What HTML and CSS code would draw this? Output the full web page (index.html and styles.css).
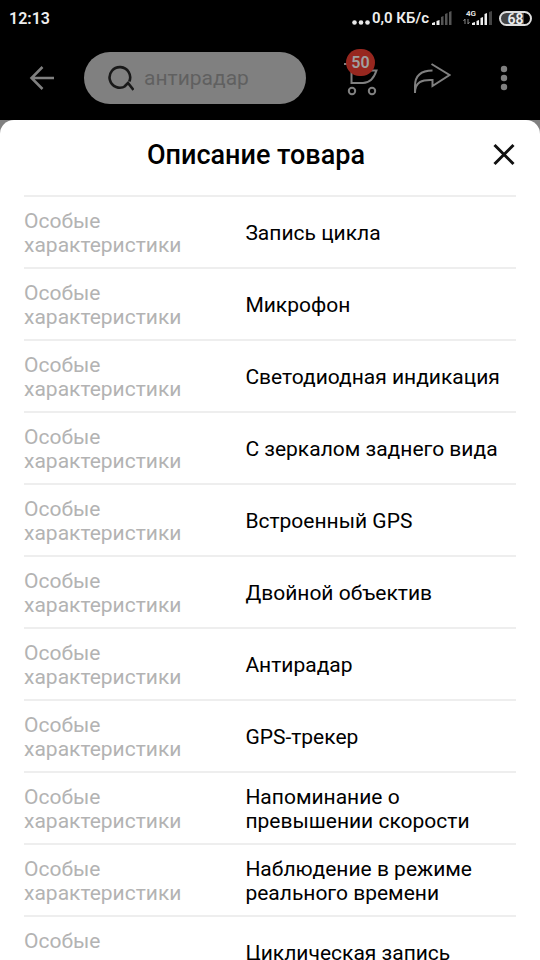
FILE: index.html
```html
<!DOCTYPE html>
<html lang="ru">
<head>
<meta charset="utf-8">
<meta name="viewport" content="width=device-width, initial-scale=1">
<title>Описание товара</title>
<link rel="stylesheet" href="styles.css">
</head>
<body>
<div class="status">
  <span class="clock">12:13</span>
  <div class="indicators">
    <svg class="dots" width="18" height="16" viewBox="0 0 18 16" fill="#e8e8e8"><circle cx="2.5" cy="12.5" r="2.3"/><circle cx="9" cy="12.5" r="2.3"/><circle cx="15.5" cy="12.5" r="2.3"/></svg>
    <span class="speed">0,0 КБ/с</span>
    <svg class="signal" width="20" height="16" viewBox="0 0 20 16"><path fill="#eee" d="M0 15v-2l3-1v3zM4.500 15v-4l3-1v5z"/><path fill="#555" d="M9 15V7l2.500-1v9zM13 15V4l2.500-1v12zM17 15V2l2.500-1v14z"/></svg>
    <svg class="signal-4g" width="31" height="26" viewBox="0 5 31 26"><text x="3" y="16" class="net">4G</text><path fill="none" stroke="#888" d="M2 24v-5l-1.500 2M5 19v5l1.500-2"/><path fill="#eee" d="M9 25v-2l3-1v3zM13.500 25v-4l2.500-1v5zM17.500 25v-7l2.500-1v8zM21.500 25V14l2.500-1v12z"/><path fill="#444" d="M26 25V12l3-1v14z"/></svg>
    <span class="battery">68</span>
  </div>
</div>
<header class="toolbar">
  <button class="icon-button back" aria-label="Назад"><svg width="26" height="26" viewBox="0 0 26 26" fill="none" stroke="#808080" stroke-width="2.500"><path d="M13.500 2 2.500 13l11 11M2.500 13H25"/></svg></button>
  <label class="search">
    <svg width="26" height="27" viewBox="0 0 26 27" fill="none" stroke="#191919" stroke-width="2.600"><path d="M21.300 16.500A10.300 10.300 0 1 0 17.500 21M16.500 21.500l3.500-3.500 5.500 7"/></svg>
    <input type="text" placeholder="антирадар" aria-label="Поиск">
  </label>
  <button class="icon-button cart" aria-label="Корзина"><svg width="36" height="44" viewBox="0 0 36 44" fill="none" stroke="#808080" stroke-width="2"><path d="M2 8h6l1.500 6v13H21c7 0 11-5 13.500-12.500H9.500"/><circle cx="10" cy="35" r="3.200"/><circle cx="30" cy="35" r="3.200"/></svg><span class="badge">50</span></button>
  <button class="icon-button share" aria-label="Поделиться"><svg width="38" height="32" viewBox="0 0 38 32" fill="none" stroke="#808080" stroke-width="2"><path d="M18.500 2 36.500 13 19.500 24v-6C9 17.500 2 20 2 31V24C2 14 8 8.500 19.500 8.500"/></svg></button>
  <button class="icon-button more" aria-label="Ещё"><svg width="8" height="26" viewBox="0 0 8 26" fill="#808080"><circle cx="4" cy="4" r="3.200"/><circle cx="4" cy="13" r="3.200"/><circle cx="4" cy="22" r="3.200"/></svg></button>
</header>
<main class="sheet">
  <div class="sheet-head">
    <h1>Описание товара</h1>
    <button class="icon-button close" aria-label="Закрыть"><svg width="24" height="24" viewBox="0 0 24 24" fill="none" stroke="#111" stroke-width="3"><path d="m2.500 2 19 19m0-19-19 19"/></svg></button>
  </div>
  <table class="specs">
    <tbody>
      <tr><th scope="row">Особые характеристики</th><td>Запись цикла</td></tr>
      <tr><th scope="row">Особые характеристики</th><td>Микрофон</td></tr>
      <tr><th scope="row">Особые характеристики</th><td>Светодиодная индикация</td></tr>
      <tr><th scope="row">Особые характеристики</th><td>С зеркалом заднего вида</td></tr>
      <tr><th scope="row">Особые характеристики</th><td>Встроенный GPS</td></tr>
      <tr><th scope="row">Особые характеристики</th><td>Двойной объектив</td></tr>
      <tr><th scope="row">Особые характеристики</th><td>Антирадар</td></tr>
      <tr><th scope="row">Особые характеристики</th><td>GPS-трекер</td></tr>
      <tr><th scope="row">Особые характеристики</th><td>Напоминание о превышении скорости</td></tr>
      <tr><th scope="row">Особые характеристики</th><td>Наблюдение в режиме реального времени</td></tr>
      <tr><th scope="row">Особые характеристики</th><td>Циклическая запись</td></tr>
    </tbody>
  </table>
</main>
</body>
</html>
```
FILE: styles.css
```css
* { box-sizing: border-box; }
body {
  margin: 0;
  height: 100vh;
  overflow: hidden;
  display: flex;
  flex-direction: column;
  background: #808080;
  font-family: Roboto, "Noto Sans", sans-serif;
}
svg { display: block; }
.status {
  flex: none;
  height: 36px;
  padding: 0 8px 0 9px;
  display: flex;
  align-items: center;
  justify-content: space-between;
  background: #000;
  color: #eee;
  font-size: 16px;
  font-weight: 600;
}
.indicators { display: flex; align-items: center; }
.speed { font-size: 15px; font-weight: 600; margin: 0 3px 0 2px; }
.signal-4g { margin: 0 5px 0 11px; }
.net { font-size: 8px; font-weight: 600; fill: #eee; }
.battery {
  width: 33px;
  height: 15px;
  border: 2px solid #ddd;
  border-radius: 8px;
  background: linear-gradient(90deg, #444 80%, #000 80%);
  font-size: 14px;
  line-height: 12px;
  text-align: center;
}
.toolbar {
  flex: none;
  height: 84px;
  padding: 0 32px 0 29px;
  display: flex;
  align-items: center;
  background: #000;
}
.icon-button {
  flex: none;
  padding: 0;
  border: 0;
  background: none;
  position: relative;
}
.search {
  flex: 1;
  min-width: 0;
  height: 52px;
  margin: 0 36px 0 29px;
  padding: 0 24px;
  display: flex;
  align-items: center;
  gap: 10px;
  border-radius: 26px;
  background: #808080;
}
.search svg { flex: none; }
.search input {
  flex: 1;
  min-width: 0;
  padding: 0;
  border: 0;
  outline: 0;
  background: none;
  font: 21px/24px Roboto, "Noto Sans", sans-serif;
}
.search input::placeholder { color: #606060; opacity: 1; }
.cart { margin-right: 35px; }
.badge {
  position: absolute;
  left: 4px;
  top: -7px;
  width: 29px;
  height: 27px;
  border-radius: 14px;
  background: #97271f;
  color: #a0a0a0;
  font: 600 16px/27px Roboto, sans-serif;
  text-align: center;
}
.share { margin-right: 49px; }
.sheet {
  flex: 1;
  min-height: 0;
  overflow: hidden;
  padding: 0 24px;
  border-radius: 14px 14px 0 0;
  background: #fff;
}
.sheet-head {
  height: 75px;
  padding-bottom: 5px;
  display: grid;
  grid-template-columns: 1fr 24px;
  column-gap: 4px;
  align-items: center;
}
h1 {
  margin: 0;
  font-size: 27px;
  line-height: 32px;
  font-weight: 500;
  text-align: center;
}
.specs {
  width: 100%;
  border-collapse: separate;
  border-spacing: 0;
  table-layout: fixed;
}
.specs th, .specs td {
  height: 72px;
  padding: 12px 0 10px;
  border-top: 2px solid #eee;
  font-size: 21px;
  line-height: 24px;
  font-weight: 400;
  text-align: left;
  vertical-align: middle;
}
.specs th { width: 45%; padding-right: 40px; color: #b3b3b3; }
.specs td { color: #000; }
```
